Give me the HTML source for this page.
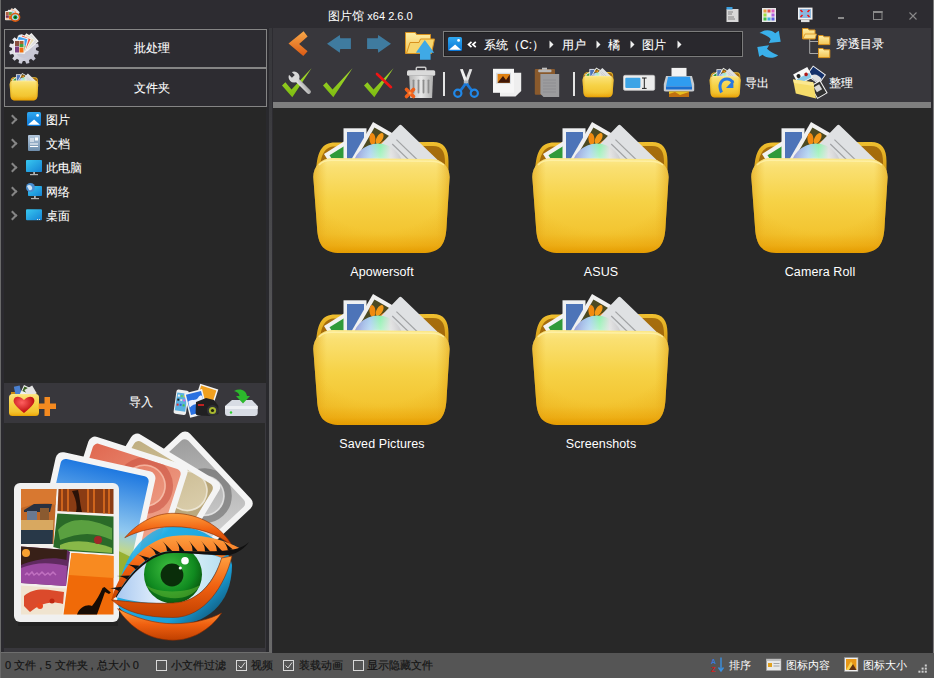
<!DOCTYPE html>
<html><head><meta charset="utf-8">
<style>
*{box-sizing:border-box;margin:0;padding:0}
html,body{width:934px;height:678px;overflow:hidden;background:#2d2c31;font-family:"Liberation Sans",sans-serif;color:#fff;font-size:12px}
.a{position:absolute}
#wl{left:0;top:0;width:1px;height:678px;background:#6a6a6a}
#wr{left:933px;top:0;width:1px;height:653px;background:#7a7a7a}
#title{left:328px;top:8px;font-size:12px;color:#fff;white-space:nowrap}
#lp{left:1px;top:28px;width:271px;height:625px;background:#2b2a2f}
.btnbox{left:4px;width:263px;border:1px solid #858585;background:#2d2c31}
.btxt{font-size:12px;color:#fff;-webkit-text-stroke:0.1px #fff;white-space:nowrap}
#tree{left:4px;top:107px;width:262px;height:276px;background:#272727}
.row{position:absolute;left:0;height:24px;width:260px}
.chev{position:absolute;left:5px;top:8px;width:7px;height:7px;border-right:2px solid #858585;border-top:2px solid #858585;transform:rotate(45deg)}
.rtxt{position:absolute;left:42px;top:4px;font-size:12px;color:#fff;-webkit-text-stroke:0.1px #fff;white-space:nowrap}
#imp{left:4px;top:383px;width:262px;height:40px;background:#38373c}
#logo{left:4px;top:423px;width:262px;height:229px;background:#2a2a2a;border-right:1px solid #3a393e;border-bottom:4px solid #38373c}
#split{left:269px;top:28px;width:3px;height:625px;background:linear-gradient(#38383c,#3a3a3e 13%,#5c5c5e 55%,#6a6a6a)}
#splitd{left:266px;top:107px;width:3px;height:546px;background:#29292d}
#tb{left:273px;top:28px;width:658px;height:74px;background:#38373c}
#strip{left:273px;top:102px;width:658px;height:6px;background:#7f7f7f}
#content{left:273px;top:108px;width:659px;height:545px;background:#282828}
#status{left:1px;top:653px;width:933px;height:25px;background:#555555}
.stxt{font-size:11px;color:#fff;white-space:nowrap}
.dk{color:#151515;-webkit-text-stroke:0.2px #151515}
.cb{position:absolute;width:11px;height:11px;border:1px solid #d0d0d0}
.fname{position:absolute;width:200px;text-align:center;font-size:12.5px;letter-spacing:0.1px;color:#fff;white-space:nowrap}
.addr{left:443px;top:31px;width:300px;height:26px;border:1px solid #7c7c7c;background:#29282d;box-shadow:inset 0 0 0 1px #1e1e20}
.sep{position:absolute;top:72px;width:2px;height:24px;background:#e8e8e8}
</style></head><body>
<svg width="0" height="0" style="position:absolute">
<defs>
<linearGradient id="fgFront" x1="0" y1="0" x2="0" y2="1">
<stop offset="0" stop-color="#fce98c"/><stop offset="0.1" stop-color="#fae072"/>
<stop offset="0.45" stop-color="#f6d246"/><stop offset="0.8" stop-color="#f3c430"/><stop offset="0.92" stop-color="#f0b41a"/><stop offset="1" stop-color="#e6a000"/>
</linearGradient>
<linearGradient id="fgSide" x1="0" y1="0" x2="1" y2="0">
<stop offset="0" stop-color="#e0a010" stop-opacity="0.55"/><stop offset="0.1" stop-color="#e8b020" stop-opacity="0"/>
<stop offset="0.9" stop-color="#e8b020" stop-opacity="0"/><stop offset="1" stop-color="#e0a010" stop-opacity="0.55"/>
</linearGradient>
<radialGradient id="fgGlow" cx="0.5" cy="0.3" r="0.75"><stop offset="0.62" stop-color="#e09a00" stop-opacity="0"/><stop offset="1" stop-color="#e09000" stop-opacity="0.28"/></radialGradient>
<linearGradient id="fgBack" x1="0" y1="0" x2="0" y2="1">
<stop offset="0" stop-color="#f0c030"/><stop offset="1" stop-color="#c88a08"/>
</linearGradient>
<linearGradient id="cdL" x1="0" y1="0" x2="1" y2="0"><stop offset="0" stop-color="#9a9ad8"/><stop offset="0.35" stop-color="#a8d0f0"/><stop offset="0.55" stop-color="#90f0b0"/><stop offset="0.75" stop-color="#e0e0e0"/><stop offset="1" stop-color="#c8c8cc"/></linearGradient>
<radialGradient id="cdG" cx="0.5" cy="0.5" r="0.5">
<stop offset="0.1" stop-color="#f0f0f4"/><stop offset="0.5" stop-color="#ffffff" stop-opacity="0.3"/><stop offset="1" stop-color="#ffffff" stop-opacity="0"/>
</radialGradient>
<symbol id="folder" viewBox="0 0 155 145">
<path d="M11,62 C11,36 17,27.5 30,27.5 L128,27 C139,27 143.5,34 143.5,46 L143.5,70 L11,70 Z" fill="url(#fgBack)"/>
<path d="M14.5,62 C14.5,39 20,31.5 30,31.5 L128,31 C137,31 140,37 140,47 L140,70 L14.5,70 Z" fill="#9a6008" opacity="0.85"/>
<g transform="translate(19 39) rotate(-32)"><rect x="0" y="0" width="46" height="40" fill="#f2f2f2"/><rect x="4" y="4" width="38" height="32" fill="#2f9a3a"/></g>
<rect x="38.5" y="13.3" width="23" height="45" fill="#eef0f2"/><rect x="42" y="17" width="17" height="40" fill="#4d74b8"/>
<g transform="rotate(30 68 7)"><rect x="68" y="7" width="34" height="48" fill="#f0f0f0"/><rect x="72" y="11" width="26" height="40" fill="#4c4a22"/>
<ellipse cx="76" cy="22" rx="3" ry="6" fill="#f08a10" transform="rotate(-35 76 22)"/><ellipse cx="82" cy="18" rx="3" ry="6" fill="#f59a18"/><ellipse cx="89" cy="20" rx="3" ry="6" fill="#e88010" transform="rotate(35 89 20)"/><ellipse cx="94" cy="27" rx="3" ry="5" fill="#f08a10" transform="rotate(70 94 27)"/></g>

<g transform="translate(95.4 9) rotate(44)"><rect x="0" y="0" width="60" height="40" rx="2" fill="#dfe1e3"/><line x1="8" y1="14" x2="50" y2="14" stroke="#a0a2a4" stroke-width="1.2"/><line x1="8" y1="20" x2="50" y2="20" stroke="#a0a2a4" stroke-width="1.2"/></g><circle cx="73" cy="54" r="25.5" fill="url(#cdL)"/><circle cx="73" cy="54" r="25.5" fill="url(#cdG)"/>
<path d="M8.3,62 C8.3,51.5 16.5,43 27,43 L126,44 C136.5,44 144.6,51.5 144.6,62 L141.5,112 C140.5,131 134,138 117,138 L36,138 C19,138 13,131 12,112 Z" fill="url(#fgFront)"/>
<path d="M8.3,62 C8.3,51.5 16.5,43 27,43 L126,44 C136.5,44 144.6,51.5 144.6,62 L141.5,112 C140.5,131 134,138 117,138 L36,138 C19,138 13,131 12,112 Z" fill="url(#fgSide)"/>
<path d="M8.3,62 C8.3,51.5 16.5,43 27,43 L126,44 C136.5,44 144.6,51.5 144.6,62 L141.5,112 C140.5,131 134,138 117,138 L36,138 C19,138 13,131 12,112 Z" fill="url(#fgGlow)"/>
<path d="M14,50 C17,46.5 21,45.3 27,45.3 L126,46.3 C132,46.3 136,47.5 139,50" fill="none" stroke="#fff4b0" stroke-width="1.5" opacity="0.7"/>
</symbol>
</defs></svg>

<div class="a" id="wl"></div>
<div class="a" id="wr"></div>
<div class="a" id="title">图片馆 <span style="font-size:11px">x64 2.6.0</span></div>

<div class="a" id="lp"></div>
<div class="a btnbox" style="top:29px;height:39px"></div>
<div class="a btnbox" style="top:68px;height:39px"></div>
<div class="a btxt" style="left:134px;top:40px">批处理</div>
<div class="a btxt" style="left:134px;top:80px">文件夹</div>

<div class="a" id="tree">
  <div class="row" style="top:1px"><div class="chev"></div><div class="rtxt">图片</div></div>
  <div class="row" style="top:25px"><div class="chev"></div><div class="rtxt">文档</div></div>
  <div class="row" style="top:49px"><div class="chev"></div><div class="rtxt">此电脑</div></div>
  <div class="row" style="top:73px"><div class="chev"></div><div class="rtxt">网络</div></div>
  <div class="row" style="top:97px"><div class="chev"></div><div class="rtxt">桌面</div></div>
</div>
<div class="a" id="imp"></div>
<div class="a btxt" style="left:129px;top:394px">导入</div>
<div class="a" id="logo"></div>
<div class="a" id="splitd"></div><div class="a" id="split"></div>

<svg class="a" style="left:0;top:0" width="270" height="652">
<defs>
<clipPath id="cardClip"><rect x="6" y="6" width="91" height="128" rx="5"/></clipPath>
<linearGradient id="lgSky" x1="0" y1="0" x2="0" y2="1"><stop offset="0" stop-color="#1e78e0"/><stop offset="0.45" stop-color="#90c8f0"/><stop offset="0.6" stop-color="#c0d890"/><stop offset="1" stop-color="#6a9028"/></linearGradient>
<linearGradient id="lgRed" x1="0" y1="0" x2="1" y2="1"><stop offset="0" stop-color="#e06850"/><stop offset="1" stop-color="#f4b8a0"/></linearGradient>
<linearGradient id="lgBeige" x1="0" y1="0" x2="1" y2="1"><stop offset="0" stop-color="#bfae80"/><stop offset="1" stop-color="#ece2c8"/></linearGradient>
<linearGradient id="lgGray" x1="0" y1="0" x2="1" y2="1"><stop offset="0" stop-color="#9c9c9c"/><stop offset="1" stop-color="#e8e8e8"/></linearGradient>
<linearGradient id="lgOrange" x1="0" y1="0" x2="0" y2="1"><stop offset="0" stop-color="#ffa040"/><stop offset="0.5" stop-color="#f06010"/><stop offset="1" stop-color="#c04000"/></linearGradient>
<radialGradient id="lgIris" cx="0.45" cy="0.4" r="0.6"><stop offset="0" stop-color="#40c040"/><stop offset="0.7" stop-color="#108a20"/><stop offset="1" stop-color="#0a5a10"/></radialGradient>
<linearGradient id="lgBlue2" x1="0" y1="0" x2="1" y2="1"><stop offset="0" stop-color="#2ab0e8" stop-opacity="0.3"/><stop offset="0.25" stop-color="#22aee6"/><stop offset="0.7" stop-color="#1aa0d8"/><stop offset="1" stop-color="#0a3048"/></linearGradient>
<radialGradient id="lgBlue" cx="0.5" cy="0.5" r="0.5"><stop offset="0.6" stop-color="#20a8e0"/><stop offset="0.9" stop-color="#1890c8"/><stop offset="1" stop-color="#1890c8" stop-opacity="0"/></radialGradient>
<linearGradient id="lgScl" x1="0" y1="0" x2="1" y2="0"><stop offset="0" stop-color="#a8c8f0"/><stop offset="0.5" stop-color="#f0f8ff"/><stop offset="1" stop-color="#b8e0f0"/></linearGradient>
</defs>
<!-- cards -->
<g transform="translate(185.3 428.6) rotate(46.9)"><rect x="0" y="0" width="103" height="140" rx="7" fill="#f4f4f4"/><rect x="6" y="6" width="91" height="128" rx="5" fill="url(#lgGray)"/><g clip-path="url(#cardClip)"><circle cx="62" cy="32" r="24" fill="none" stroke="#606060" stroke-width="7" opacity="0.55"/><circle cx="62" cy="32" r="19.5" fill="none" stroke="#ffffff" stroke-width="1.5" opacity="0.5"/></g></g>
<g transform="translate(134.8 431) rotate(31.2)"><rect x="0" y="0" width="103" height="140" rx="7" fill="#f4f4f4"/><rect x="6" y="6" width="91" height="128" rx="5" fill="url(#lgBeige)"/><g clip-path="url(#cardClip)"><circle cx="76" cy="24" r="24" fill="none" stroke="#a08a58" stroke-width="7" opacity="0.55"/><circle cx="76" cy="24" r="19.5" fill="none" stroke="#ffffff" stroke-width="1.5" opacity="0.5"/></g></g>
<g transform="translate(90.5 434.8) rotate(17.8)"><rect x="0" y="0" width="104" height="140" rx="7" fill="#f4f4f4"/><rect x="6" y="6" width="92" height="128" rx="5" fill="url(#lgRed)"/><g clip-path="url(#cardClip)"><circle cx="67" cy="32" r="25" fill="none" stroke="#c85040" stroke-width="7" opacity="0.55"/><circle cx="67" cy="32" r="20.5" fill="none" stroke="#ffe0d0" stroke-width="1.5" opacity="0.5"/></g></g>
<g transform="translate(57.2 450.8) rotate(12.5)"><rect x="0" y="0" width="102" height="140" rx="7" fill="#f4f4f4"/><rect x="6" y="6" width="90" height="128" rx="5" fill="url(#lgSky)"/><path d="M6,95 C30,80 60,78 96,88 V134 H6 Z" fill="#98b030"/><path d="M55,40 C48,42 45,55 50,62 C52,70 58,72 62,64 C66,56 64,44 55,40 Z" fill="#3a5a28"/><rect x="54" y="62" width="2" height="18" fill="#3a3020"/></g>
<!-- collage card -->
<rect x="14" y="483" width="105" height="139" rx="6" fill="#f0f0f0"/>
<rect x="18" y="622" width="100" height="4" fill="#000" opacity="0.15"/>
<rect x="21" y="489" width="92.5" height="126" rx="4" fill="#f4f0ec"/>
<path d="M21,489 H56.5 L53.5,544 H21 Z" fill="#c06828"/>
<path d="M21,489 H56.5 L55.5,505 C45,500 30,505 21,508 Z" fill="#d87830"/>
<path d="M24,510 L34,504 H52 L50,512 H24 Z" fill="#283040"/><rect x="27" y="511" width="10" height="9" fill="#6a7890"/><rect x="40" y="508" width="9" height="13" fill="#8a5a30"/>
<path d="M21,520 H53.5 L53,531 H21 Z" fill="#d8a860"/><path d="M21,530 H53 L52.5,544 H21 Z" fill="#283848"/>
<path d="M58.5,489 H113.5 V514 L57.5,511 Z" fill="#8a3c14"/>
<path d="M62,489 V511 M68,489 V511.5 M88,489 V512.5 M94,489 V513 M104,489 V513.5 M109,489 V514" stroke="#e07020" stroke-width="1.6"/>
<path d="M72,491 C75,497 78,505 76,512 L82,512 C80,505 80,497 78,490 Z" fill="#2a1208"/>
<path d="M57.3,513.5 L113.5,516.5 V554 L68,551 L53.3,547 Z" fill="#2a6a28"/>
<path d="M58,530 C70,516 90,518 112,528 L112,540 C95,532 80,532 60,540 Z" fill="#5aa040"/>
<path d="M60,545 C75,538 95,542 112,548 L112,553 L60,549 Z" fill="#88b848"/>
<circle cx="98" cy="540" r="4" fill="#a02828"/>
<path d="M21,546.5 L67,550 L70,552 L66,586 L21,583 Z" fill="#602a60"/>
<path d="M21,546.5 L67,550 L66.5,560 C50,556 35,560 21,565 Z" fill="#382018"/>
<circle cx="26" cy="553" r="4" fill="#f8a030"/>
<path d="M21,568 C35,562 50,562 67,566 L66,586 L21,583 Z" fill="#9a48a0"/>
<path d="M25,575 l2,-2 l2,2 l3,-3 l2,3 l3,-2 l2,2 l3,-3 l3,3 l3,-2 l2,2 l3,-3 l3,3" stroke="#c070c0" stroke-width="1.5" fill="none"/>
<path d="M71.5,553 L113.5,556 V614.5 H63.5 Z" fill="#f06a08"/><path d="M71.5,553 L113.5,556 V578 L69,575 Z" fill="#f88a20"/>
<path d="M77,614.5 C80,606 88,604 92,606 C96,601 100,594 102.5,588 L104.5,587 L110.8,592.5 L109,594 L105,592 C103,598 100,606 97,614.5 Z" fill="#180c04"/>
<path d="M21,585.5 L65.8,588.5 L62.5,614.5 H21 Z" fill="#f0e4d0"/>
<path d="M24,596 C35,586 50,590 64,592 L63,604 C50,600 40,604 30,612 L24,606 Z" fill="#d83818" opacity="0.9"/>
<circle cx="40" cy="606" r="3" fill="#e84820"/><circle cx="52" cy="601" r="2.5" fill="#c02810"/>
<!-- eye -->
<path d="M117,603 C118,560 145,526 173,526 C205,526 228,545 232,565 C232,605 205,625 173,625 C145,625 120,615 117,603 Z" fill="url(#lgBlue2)"/>
<path d="M124.8,537.7 C140,520 158,513.3 173,513.3 C200,513.3 222,527 233,547 C218,533 196,526.7 173,526.7 C155,526.7 138,531 124.8,537.7 Z" fill="url(#lgOrange)" stroke="#8a2a00" stroke-width="0.6"/>
<path d="M117.7,608.6 C135,618 155,623.7 173,623.7 C195,623.7 210,619 221.6,613 C210,630 192,640.2 173,640.2 C150,640.2 130,628 117.7,608.6 Z" fill="url(#lgOrange)" stroke="#8a2a00" stroke-width="0.6"/>
<path d="M111.5,599.8 C118,575 140,540 173,536 C200,533 225,540 239.3,548 C232,552 226,555 221.6,558 C212,553 195,551 173,551 C150,551 130,570 116,597 Z" fill="url(#lgOrange)"/>
<path d="M116,597 C130,572 150,551 173,551 C195,551 212,554 221.6,558 C215,578 200,603 173,603 C150,604 130,601 116,597 Z" fill="url(#lgScl)"/>
<clipPath id="sclClip"><path d="M116,597 C130,572 150,551 173,551 C195,551 212,554 221.6,558 C215,578 200,603 173,603 C150,604 130,601 116,597 Z"/></clipPath>
<g clip-path="url(#sclClip)">
<circle cx="173" cy="574.5" r="29" fill="url(#lgIris)"/>
<path d="M146,585 C155,600 190,605 200,585 C190,592 160,595 146,585 Z" fill="#5ab030" opacity="0.6"/>
<circle cx="172" cy="575" r="11.4" fill="#0a2e0a"/>
<circle cx="185" cy="560.8" r="3.8" fill="#fff"/><circle cx="180.3" cy="568" r="1.6" fill="#fff"/>
</g>
<path d="M111.5,599.8 C130,602 150,604 173,603 C200,602 215,580 221.6,558 L232,556 C225,585 205,617.5 173,617.5 C145,617.5 125,612 111.5,599.8 Z" fill="url(#lgOrange)" stroke="#8a2a00" stroke-width="0.6"/>
<path d="M116,596 C130,572 150,551 173,551 C198,551 222,553 239,548 C244,546 247,544 249,542 C245,548 238,553 230,555 C210,556 195,553 173,553 C152,553 132,572 116,598 Z" fill="#111"/>
<path d="M118.9,591.1 Q114.2,587.7 107.9,588.5 L121.8,586.7 Z M126.9,579.6 Q122.5,575.7 116.2,575.9 L130.2,575.6 Z M135.8,569.4 Q132.0,565.0 125.7,564.3 L139.6,565.8 Z M145.5,560.9 Q142.4,555.9 136.3,554.2 L149.8,558.1 Z M155.9,554.8 Q154.0,549.2 148.5,546.1 L160.7,553.0 Z M167.0,551.3 Q166.8,545.5 162.3,541.0 L172.2,551.0 Z M179.3,551.0 Q179.6,545.2 175.6,540.3 L184.5,551.1 Z M192.5,551.3 Q192.8,545.4 188.7,540.5 L197.7,551.3 Z M205.0,551.4 Q205.2,545.5 201.0,540.8 L210.2,551.4 Z M216.9,551.2 Q216.7,545.3 212.3,540.8 L222.1,550.9 Z M227.8,550.3 Q227.0,544.5 222.2,540.4 L232.9,549.5 Z " fill="#111"/>
</svg>


<svg class="a" style="left:0;top:0" width="280" height="678">
<defs>
<linearGradient id="gGear" x1="0" y1="0" x2="1" y2="1"><stop offset="0" stop-color="#f4f4f8"/><stop offset="1" stop-color="#b8b8c8"/></linearGradient>
<linearGradient id="gMon" x1="0" y1="0" x2="1" y2="1"><stop offset="0" stop-color="#38c8f0"/><stop offset="1" stop-color="#1482d4"/></linearGradient>
<linearGradient id="gDoc" x1="0" y1="0" x2="0" y2="1"><stop offset="0" stop-color="#b4c8dc"/><stop offset="1" stop-color="#6e8eac"/></linearGradient>
<radialGradient id="gHeart" cx="0.4" cy="0.35" r="0.6"><stop offset="0" stop-color="#ff6060"/><stop offset="1" stop-color="#c01010"/></radialGradient>
</defs>
<path d="M36.0,49.0 L35.9,50.1 L38.8,51.3 L38.0,54.4 L34.9,54.0 L34.4,55.0 L33.8,56.0 L35.7,58.4 L33.4,60.7 L31.0,58.8 L30.0,59.4 L29.0,59.9 L29.4,63.0 L26.3,63.8 L25.1,60.9 L24.0,61.0 L22.9,60.9 L21.7,63.8 L18.6,63.0 L19.0,59.9 L18.0,59.4 L17.0,58.8 L14.6,60.7 L12.3,58.4 L14.2,56.0 L13.6,55.0 L13.1,54.0 L10.0,54.4 L9.2,51.3 L12.1,50.1 L12.0,49.0 L12.1,47.9 L9.2,46.7 L10.0,43.6 L13.1,44.0 L13.6,43.0 L14.2,42.0 L12.3,39.6 L14.6,37.3 L17.0,39.2 L18.0,38.6 L19.0,38.1 L18.6,35.0 L21.7,34.2 L22.9,37.1 L24.0,37.0 L25.1,37.1 L26.3,34.2 L29.4,35.0 L29.0,38.1 L30.0,38.6 L31.0,39.2 L33.4,37.3 L35.7,39.6 L33.8,42.0 L34.4,43.0 L34.9,44.0 L38.0,43.6 L38.8,46.7 L35.9,47.9 Z" fill="url(#gGear)"/>
<circle cx="24" cy="49" r="9" fill="#c8c8d4"/>
<g transform="translate(31.5 33) rotate(49)"><rect x="0" y="0" width="11" height="15" fill="#f4f4f4"/><rect x="1" y="1" width="9" height="13" fill="#dcdcdc"/></g>
<g transform="translate(26.4 33.3) rotate(37)"><rect x="0" y="0" width="11" height="15" fill="#f0f0f0"/><rect x="1" y="1" width="9" height="13" fill="#e8dcb0"/></g>
<g transform="translate(21.9 34.2) rotate(25)"><rect x="0" y="0" width="11" height="15" fill="#f4f4f4"/><rect x="1" y="1" width="9" height="13" fill="#f05a40"/></g>
<g transform="translate(18 35.6) rotate(15)"><rect x="0" y="0" width="11" height="16" fill="#f4f4f4"/><rect x="1" y="1" width="9" height="7" fill="#40a0f0"/><rect x="1" y="8" width="9" height="7" fill="#60a030"/></g>
<rect x="14" y="39.8" width="10.5" height="13.8" fill="#f0f0f0"/>
<rect x="15" y="41" width="4" height="5" fill="#8a5040"/><rect x="19.5" y="41" width="4" height="3" fill="#b06030"/><rect x="19.5" y="44" width="4" height="3" fill="#40a040"/>
<rect x="15" y="46.5" width="4" height="6" fill="#7a4080"/><rect x="19.5" y="47.5" width="4" height="5" fill="#f07010"/>
<use href="#folder" x="7.9" y="71.5" width="32.5" height="30.4"/>
<!-- tree icons -->
<rect x="27" y="112" width="14" height="14" rx="1.5" fill="url(#gBlue)"/>
<path d="M28,124.8 L34.1,119.4 L40,124.8 Z" fill="#fff"/><circle cx="37.6" cy="115.4" r="1.4" fill="#fff"/>
<rect x="28" y="135" width="12" height="16" rx="1" fill="url(#gDoc)"/>
<path d="M30,139 H34 M30,141 H34 M30,144 H38 M30,146.5 H38" stroke="#fff" stroke-width="1.1"/><rect x="35" y="137.5" width="3" height="3" fill="#fff"/>
<rect x="26" y="160" width="16" height="12" rx="0.8" fill="url(#gMon)"/>
<rect x="33.2" y="172" width="1.8" height="2" fill="#b0b0b0"/><rect x="30" y="174" width="8" height="1.2" fill="#b0b0b0"/>
<rect x="28" y="186" width="14" height="10" rx="0.8" fill="url(#gMon)"/>
<rect x="34" y="196" width="1.8" height="2" fill="#b0b0b0"/><rect x="31" y="198" width="8" height="1.2" fill="#b0b0b0"/>
<circle cx="30.5" cy="187.5" r="4.5" fill="#4a8ed0"/><path d="M27,186 C29,184 31,185 32,187 C33,189 31,191 29,190" fill="#e0eef8" opacity="0.9"/>
<rect x="26" y="209.2" width="16" height="11.1" rx="1" fill="url(#gMon)"/>
<rect x="37" y="219" width="1" height="1" fill="#ddd"/><rect x="39" y="219" width="1" height="1" fill="#ddd"/>
<!-- import bar -->
<path d="M11,392 L36,392 L37,396 H11 Z" fill="#c88a10"/>
<g transform="rotate(-12 18 392)"><rect x="15" y="386" width="6" height="10" fill="#4a80d0"/></g>
<g transform="rotate(25 25 390)"><rect x="22" y="386" width="7" height="10" fill="#f0f0f0"/><rect x="23" y="387" width="5" height="5" fill="#3a6020"/></g>
<g transform="rotate(-30 29 392)"><rect x="26" y="388" width="9" height="9" fill="#e4e4e4"/></g>
<rect x="9" y="394" width="30" height="22" rx="3.5" fill="url(#fgFront)"/>
<path d="M24,413 C15,406 12.5,402 14,399 C15.5,396 20,396 24,400 C28,396 32.5,396 34,399 C35.5,402 33,406 24,413 Z" fill="url(#gHeart)"/>
<path d="M38.7,403.5 H56 V409 H38.7 Z M44.5,397 H50 V416 H44.5 Z" fill="#f48a20"/>
<!-- phone camera -->
<g transform="rotate(8 181 402)"><rect x="175" y="390" width="12.5" height="24.5" rx="2" fill="#eeeeee"/><rect x="176" y="393" width="10.5" height="18" fill="#5ab0e0"/>
<rect x="177" y="395" width="2" height="2" fill="#f0f0f0"/><rect x="180" y="395" width="2" height="2" fill="#60d060"/><rect x="183" y="395" width="2" height="2" fill="#f0c040"/>
<rect x="177" y="399" width="2" height="2" fill="#202020"/><rect x="180" y="399" width="2" height="2" fill="#e0e0e0"/><rect x="183" y="399" width="2" height="2" fill="#e060e0"/>
<rect x="177" y="404" width="2" height="2" fill="#e03030"/><rect x="180" y="404" width="2" height="2" fill="#3060e0"/><rect x="183" y="404" width="2" height="2" fill="#40c040"/></g>
<g transform="rotate(18 206 395)"><rect x="197" y="386" width="19" height="16" fill="#f4f4f4"/><rect x="198.5" y="387.5" width="16" height="13" fill="#f0a020"/></g>
<g transform="rotate(-14 196 404)"><rect x="187" y="391" width="18.5" height="25" fill="#f4f4f4"/><rect x="188.5" y="392.5" width="15.5" height="21" fill="#2a70e0"/><path d="M189,400 C193,397 196,402 200,398 C202,396 203,398 204,397 V404 C200,406 195,402 189,406 Z" fill="#e8f0ff"/></g>
<path d="M196,402 L206,398 L214,400 L218.4,406 V414 L210,416 L198,415.5 Q195.6,415 195.6,413 Z" fill="#202022"/>
<rect x="198" y="404" width="6" height="2" fill="#c02020"/>
<circle cx="212.5" cy="410.5" r="5.6" fill="#303236"/><circle cx="212.5" cy="410.5" r="3.6" fill="#a8b830"/><circle cx="212.5" cy="410.5" r="1.6" fill="#202010"/>
<!-- drive -->
<path d="M225,406 L232,400 H252 L257.7,406 V413 Q257.7,416 254,416 H228 Q225,416 225,413 Z" fill="#d8dce4"/>
<path d="M225,406 H257.7 V409 H225 Z" fill="#eef0f4"/>
<circle cx="231" cy="412.5" r="1.2" fill="#30d030"/>
<path d="M234,391 C240,388 246,390 247,396 H250 L243,403.5 L236,396 H239.5 C239,393 237,392 234,391 Z" fill="#2cb82c"/>
</svg>


<div class="a" id="tb"></div>
<div class="a addr"></div>
<div class="a" id="strip"></div>
<div class="a" id="content"></div>
<svg class="a" style="left:305px;top:115px" width="155" height="145"><use href="#folder"/></svg>
<div class="fname" style="left:282px;top:265px">Apowersoft</div>
<svg class="a" style="left:524px;top:115px" width="155" height="145"><use href="#folder"/></svg>
<div class="fname" style="left:501px;top:265px">ASUS</div>
<svg class="a" style="left:743px;top:115px" width="155" height="145"><use href="#folder"/></svg>
<div class="fname" style="left:720px;top:265px">Camera Roll</div>
<svg class="a" style="left:305px;top:287px" width="155" height="145"><use href="#folder"/></svg>
<div class="fname" style="left:282px;top:437px">Saved Pictures</div>
<svg class="a" style="left:524px;top:287px" width="155" height="145"><use href="#folder"/></svg>
<div class="fname" style="left:501px;top:437px">Screenshots</div>


<div class="a" id="status"></div>
<div class="a" style="left:1px;top:652px;width:268px;height:1px;background:#6e6e6e"></div>

<svg class="a" style="left:0;top:0" width="934" height="678" viewBox="0 0 934 678">
<defs>
<linearGradient id="gOr" x1="0" y1="0" x2="0" y2="1"><stop offset="0" stop-color="#f7a848"/><stop offset="1" stop-color="#dc5a14"/></linearGradient>
<linearGradient id="gGr" x1="0" y1="0" x2="0" y2="1"><stop offset="0" stop-color="#a8dc30"/><stop offset="1" stop-color="#7cbc10"/></linearGradient>
<linearGradient id="gSil" x1="0" y1="0" x2="1" y2="1"><stop offset="0" stop-color="#f0f0f0"/><stop offset="1" stop-color="#9a9a9a"/></linearGradient>
<linearGradient id="gTrash" x1="0" y1="0" x2="1" y2="0"><stop offset="0" stop-color="#b8b8b8"/><stop offset="0.5" stop-color="#e8e8e8"/><stop offset="1" stop-color="#b0b0b0"/></linearGradient>
<linearGradient id="gFy" x1="0" y1="0" x2="0" y2="1"><stop offset="0" stop-color="#fff0a8"/><stop offset="1" stop-color="#f2c455"/></linearGradient>
<linearGradient id="gBlue" x1="0" y1="0" x2="0" y2="1"><stop offset="0" stop-color="#30a8f0"/><stop offset="1" stop-color="#0a76d6"/></linearGradient>
</defs>
<!-- row1: back chevron -->
<path d="M288.5,43.6 L303.6,31.3 L307.6,36.5 L299.1,44 L307.6,51.3 L303.3,56 Z" fill="url(#gOr)"/>
<path d="M327,43.8 L339.8,35 L340.2,38.3 L350.9,38.3 L350.9,49 L340.2,49 L339.8,52.7 Z" fill="#3f7b9f"/>
<path d="M391,43.8 L378.2,35 L377.8,38.3 L367.1,38.3 L367.1,49 L377.8,49 L378.2,52.7 Z" fill="#3f7b9f"/>
<!-- folder up -->
<path d="M405.5,32.5 L415.5,32.5 L416.5,34.5 L430.5,34.5 L430.5,53.5 L405.5,53.5 Z" fill="url(#gFy)" stroke="#d8921e" stroke-width="1"/>
<path d="M406.5,53.5 L410,42.5 L419,42.5 L420.5,39 L434.5,39 L431.5,53.5 Z" fill="#f7d66e" stroke="#d8921e" stroke-width="1"/>
<path d="M424.8,40 L434.2,52.8 L430.6,52.8 L430.6,59.8 L420,59.8 L420,52.8 L415.8,52.8 Z" fill="#3fa9e6"/>
<!-- address icon -->
<rect x="448" y="37" width="14" height="14" rx="1.5" fill="url(#gBlue)"/>
<path d="M449,49.8 L455.1,44.4 L461,49.8 Z" fill="#fff"/>
<circle cx="458.6" cy="40.4" r="1.4" fill="#fff"/>
<!-- refresh -->
<path d="M759.5,33 C765,28.5 772,30 775.2,33.2 L778.8,30.8 L780.7,41.7 L768.9,42.9 L770.7,39 C768,36 764,34 759.5,33 Z" fill="#3ab0ea"/>
<path d="M778.2,55.2 C773,59.5 766,58 762.5,54.8 L759.2,56.8 L757.3,46.9 L769.1,45.2 L767,48.8 C770,51.5 774,54 778.2,55.2 Z" fill="#3ab0ea"/>
<!-- tree folders -->
<path d="M809.7,39 V53.5 H818 M809.7,41.5 H818" fill="none" stroke="#a8a8a8" stroke-width="1"/>
<path d="M802.5,28.5 H808 L809,30 H815 V38.8 H802.5 Z" fill="url(#gFy)" stroke="#d8921e" stroke-width="1"/>
<path d="M803,38.8 L805,34 H816.5 L815,38.8 Z" fill="#fbe08a" stroke="#d8921e" stroke-width="0.8"/>
<path d="M818.5,35.5 H823 L824,36.8 H829.8 V44.6 H818.5 Z" fill="url(#gFy)" stroke="#d8921e" stroke-width="1"/>
<path d="M818.5,48.5 H823 L824,49.8 H829.8 V57.6 H818.5 Z" fill="url(#gFy)" stroke="#d8921e" stroke-width="1"/>
<!-- row2 checks -->
<path d="M282,85.5 L285.4,82.3 L291.5,89.5 L311.5,68.2 L292.3,97.2 Z" fill="url(#gGr)"/>
<g transform="rotate(-45 299 82)"><rect x="296.8" y="77" width="4.4" height="21" rx="2.2" fill="url(#gSil)"/><circle cx="299" cy="75" r="5.5" fill="#d8d8d8"/><rect x="297" y="68" width="4" height="6" fill="#38373c"/></g>
<path d="M323,85.5 L326.4,82.3 L332.5,89.5 L352.5,68.2 L333.3,97.2 Z" fill="url(#gGr)"/>
<path d="M364,85.5 L367.4,82.3 L373.5,89.5 L393.5,68.2 L374.3,97.2 Z" fill="url(#gGr)"/>
<path d="M377,74 L391,87.2" stroke="#f01414" stroke-width="2.6" stroke-linecap="round"/>
<!-- trash -->
<rect x="416.3" y="67.2" width="9.5" height="4" rx="1" fill="none" stroke="#c8c8c8" stroke-width="1.5"/>
<path d="M409.2,75.7 L433.1,75.7 L432.1,97.9 L410.2,97.9 Z" fill="url(#gTrash)"/>
<rect x="407" y="70.2" width="28.2" height="5.5" rx="1.5" fill="#dadada"/>
<rect x="412.6" y="79.4" width="1.8" height="14" rx="0.9" fill="#8e8e8e"/><rect x="417.6" y="79.4" width="1.8" height="14" rx="0.9" fill="#8e8e8e"/>
<rect x="422.6" y="79.4" width="1.8" height="14" rx="0.9" fill="#8e8e8e"/><rect x="427.6" y="79.4" width="1.8" height="14" rx="0.9" fill="#8e8e8e"/>
<path d="M406.5,89.5 L413.5,96.5 M413.5,89.5 L406.5,96.5" stroke="#f0601a" stroke-width="3.6" stroke-linecap="round"/><circle cx="410" cy="93" r="1.6" fill="#ff9a50"/>
<!-- separators -->
<rect x="443" y="72" width="2" height="24" fill="#e4e4e4"/>
<rect x="573" y="72" width="2" height="24" fill="#e4e4e4"/>
<!-- scissors -->
<path d="M460,69.2 L462.8,69 L467.8,82 L465,83.5 Z" fill="#f2f2f2"/>
<path d="M469.5,69 L472.3,69.2 L467.3,83.5 L464.5,82 Z" fill="#e0e0e0"/>
<rect x="463.8" y="80.5" width="4.6" height="4.5" rx="1" fill="#b0b8c0"/>
<path d="M465,84.5 L460.5,90.5 M467.2,84.5 L471.8,90.5" stroke="#1a78d8" stroke-width="2.8" stroke-linecap="round"/>
<circle cx="457.8" cy="93.2" r="3.6" fill="none" stroke="#2088e8" stroke-width="2.2"/>
<circle cx="474.3" cy="93.2" r="3.6" fill="none" stroke="#2088e8" stroke-width="2.2"/>
<!-- slides -->
<path d="M500,72.8 H521.2 V91 L515.5,96.6 H500 Z" fill="#eeeeee"/>
<rect x="493" y="68.8" width="21" height="24" fill="#f6f6f6"/>
<rect x="496" y="72.8" width="15" height="11" fill="#d8dce0"/>
<rect x="497.6" y="74" width="12.2" height="8.8" fill="#e08010"/>
<path d="M497.6,82.8 L503,76 L506,80 L509.8,74.5 V82.8 Z" fill="#401808"/>
<!-- clipboard -->
<rect x="534.8" y="69" width="20.2" height="25.8" rx="1" fill="#8a5a2c"/>
<rect x="538.2" y="69.5" width="13.3" height="2.8" rx="1" fill="#b8b8b8"/>
<rect x="542" y="67.7" width="5" height="2" fill="#c0c0c0"/>
<path d="M540.4,74 H559.2 V97 H543.5 L540.4,93.8 Z" fill="#9c9c9e"/>
<path d="M543,80 H556 M543,83 H556 M543,86 H556 M543,89 H556 M543,92 H556" stroke="#8a8a8c" stroke-width="0.7"/>
<!-- small folders -->
<use href="#folder" x="580.6" y="65.9" width="35.3" height="33"/>
<use href="#folder" x="707.7" y="66.2" width="35.3" height="33"/>
<path d="M721.5,92.5 C718,85 721,79 727,79 C730,79 732,81 733,83" fill="none" stroke="#2a78e0" stroke-width="3"/>
<path d="M733.4,80 L733.4,88 L726,88 Z" fill="#2a78e0"/>
<!-- rename -->
<rect x="623.5" y="75.3" width="31.2" height="15" rx="1.5" fill="#ececec" stroke="#c8c8c8" stroke-width="0.8"/>
<rect x="625.3" y="77.7" width="15.1" height="10.3" rx="1" fill="#3da4e6"/>
<path d="M642,78 H646.6 M644.3,78 V88.4 M642,88.4 H646.6" stroke="#202020" stroke-width="1"/>
<!-- printer -->
<rect x="671.5" y="67.9" width="15" height="8.5" fill="#f2f2f2"/>
<path d="M666,76 H692 L694.2,84 V90.5 Q694.2,91.4 692,91.4 H666 Q663.8,91.4 663.8,90.5 V84 Z" fill="#c8ccd0"/>
<path d="M668,76.8 H690 L692,86.5 H666 Z" fill="#2f9cf0"/>
<rect x="666" y="86.5" width="26" height="3" fill="#1a6fd0"/>
<rect x="669" y="91.4" width="20" height="5.6" fill="#e8c020"/>
<path d="M669,94 L675,92 L680,95 L689,92 V97 H669 Z" fill="#c07010"/>
<!-- organize -->
<g transform="rotate(36 816 75)"><rect x="808" y="69" width="16" height="12" fill="#f4f4f4"/><rect x="809" y="70" width="14" height="10" fill="#13306a"/><path d="M812,80 C813,75 817,73 823,75 V80 Z" fill="#e0e0e0"/></g>
<g transform="rotate(60 819 90)"><rect x="811" y="84" width="15" height="12" fill="#f4f4f4"/><rect x="812" y="85" width="13" height="10" fill="#303030"/><rect x="814" y="87" width="6" height="6" fill="#d8d8d8"/></g>
<g transform="rotate(-28 803 76)"><rect x="795" y="70" width="16" height="12" fill="#f8f8f8"/><rect x="796" y="76" width="14" height="5" fill="#8ac8e8"/><circle cx="799" cy="74" r="2" fill="#222"/><circle cx="806.5" cy="76" r="1.8" fill="#b01818"/></g>
<path d="M793,79.6 L813.2,82.2 L816,98.4 L795.8,93.4 Z" fill="#f5dc6a"/>
<path d="M793,79.6 L813.2,82.2 L814,86 L794,83 Z" fill="#fbe890"/>
</svg>


<div class="a btxt" style="left:836px;top:36px">穿透目录</div>
<div class="a btxt" style="left:745px;top:75px">导出</div>
<div class="a btxt" style="left:829px;top:75px">整理</div>

<div class="a btxt" style="left:484px;top:37px">系统（C:）</div>
<div class="a btxt" style="left:562px;top:37px">用户</div>
<div class="a btxt" style="left:608px;top:37px">橘</div>
<div class="a btxt" style="left:642px;top:37px">图片</div>
<svg class="a" style="left:0;top:0" width="934" height="678">
<path d="M471.5,41.8 L468.5,44.5 L471.5,47.2 M475.8,41.8 L472.8,44.5 L475.8,47.2" fill="none" stroke="#fff" stroke-width="1.7"/>
<path d="M549.5,40.5 L553.5,44.5 L549.5,48.5 Z M596.5,40.5 L600.5,44.5 L596.5,48.5 Z M630.5,40.5 L634.5,44.5 L630.5,48.5 Z M677.5,40.5 L681.5,44.5 L677.5,48.5 Z" fill="#f0f0f0"/>
<!-- window controls -->
<rect x="838" y="17" width="6" height="2" fill="#8a8a8a"/>
<rect x="873.5" y="11.5" width="8.5" height="8" fill="none" stroke="#8a8a8a" stroke-width="1"/>
<rect x="873" y="11" width="9.5" height="2" fill="#8a8a8a"/>
<path d="M909.5,12.5 L916.5,19.5 M916.5,12.5 L909.5,19.5" stroke="#8a8a8a" stroke-width="1.1"/>
<!-- title icons -->
<rect x="726.5" y="9" width="12" height="13" fill="#d8d8d8"/>
<rect x="726.5" y="7" width="6" height="2.5" fill="#3aa0e0"/>
<path d="M728,12 H733 M728,14 H732 M728,17 H734 M728,19 H735" stroke="#707070" stroke-width="0.8"/>
<rect x="762" y="8" width="14" height="14" fill="#e8e8e8"/>
<rect x="763.5" y="9.5" width="3" height="3" fill="#e8a040"/><rect x="767.5" y="9.5" width="3" height="3" fill="#e05050"/><rect x="771.5" y="9.5" width="3" height="3" fill="#e060c0"/>
<rect x="763.5" y="13.5" width="3" height="3" fill="#a0e040"/><rect x="767.5" y="13.5" width="3" height="3" fill="#f0f0f0"/><rect x="771.5" y="13.5" width="3" height="3" fill="#b060e0"/>
<rect x="763.5" y="17.5" width="3" height="3" fill="#40c040"/><rect x="767.5" y="17.5" width="3" height="3" fill="#40b0e0"/><rect x="771.5" y="17.5" width="3" height="3" fill="#6060e0"/>
<rect x="798" y="7.6" width="14.5" height="12" fill="#f0f0f0"/>
<rect x="799.5" y="9" width="11.5" height="9" fill="#8ab8e0"/>
<path d="M800.5,10 L802.5,12 M809.5,10 L807.5,12 M800.5,17 L802.5,15 M809.5,17 L807.5,15" stroke="#f01010" stroke-width="1.5"/>
<rect x="801" y="19.6" width="8.5" height="2.5" fill="#e0e0e0"/>
</svg>

<div class="a stxt dk" style="left:5px;top:658px">0 文件 , 5 文件夹 , 总大小 0</div>
<div class="a stxt dk" style="left:171px;top:658px">小文件过滤</div>
<div class="a stxt dk" style="left:251px;top:658px">视频</div>
<div class="a stxt dk" style="left:299px;top:658px">装载动画</div>
<div class="a stxt dk" style="left:367px;top:658px">显示隐藏文件</div>
<div class="a stxt" style="left:729px;top:658px">排序</div>
<div class="a stxt" style="left:786px;top:658px">图标内容</div>
<div class="a stxt" style="left:863px;top:658px">图标大小</div>
<svg class="a" style="left:0;top:0" width="934" height="678">
<rect x="156.5" y="660.5" width="10" height="10" fill="none" stroke="#d8d8d8" stroke-width="1"/>
<rect x="236.5" y="660.5" width="10" height="10" fill="none" stroke="#d8d8d8" stroke-width="1"/>
<path d="M238.5,665.5 L241,668 L245,662.5" fill="none" stroke="#d8d8d8" stroke-width="1"/>
<rect x="283.5" y="660.5" width="10" height="10" fill="none" stroke="#d8d8d8" stroke-width="1"/>
<path d="M285.5,665.5 L288,668 L292,662.5" fill="none" stroke="#d8d8d8" stroke-width="1"/>
<rect x="353.5" y="660.5" width="10" height="10" fill="none" stroke="#d8d8d8" stroke-width="1"/>
<!-- sort icon -->
<text x="711" y="664" font-family="Liberation Sans" font-size="7" font-weight="bold" fill="#3a7ad8">A</text>
<text x="711" y="672" font-family="Liberation Sans" font-size="7" font-weight="bold" fill="#d02020">Z</text>
<path d="M721,657.5 V670 M718.5,667.5 L721,671 L723.5,667.5" fill="none" stroke="#3a90e0" stroke-width="1.4"/>
<!-- content icon -->
<rect x="766.5" y="659" width="14.5" height="11.5" fill="#e8e8e8" stroke="#a0a0a0" stroke-width="0.6"/>
<rect x="766.5" y="659" width="14.5" height="2" fill="#c0c0c0"/>
<rect x="768" y="663" width="4" height="4" fill="#e0a020"/>
<path d="M773.5,663.5 H779.5 M773.5,666 H779.5" stroke="#909090" stroke-width="0.8"/>
<!-- size icon -->
<rect x="844.5" y="657.5" width="13.5" height="14" fill="#f0f0f0" stroke="#909090" stroke-width="0.6"/>
<rect x="846" y="659" width="10.5" height="11" fill="#e89818"/>
<path d="M846,670 L851,661.5 L856.5,670 Z" fill="#f8d050"/><path d="M849,670 L853,664 L856.5,670 Z" fill="#603010"/>
<!-- grip -->
<rect x="924.8" y="664.5" width="2" height="2" fill="#cfcfcf"/><rect x="921.6" y="667.6" width="2" height="2" fill="#cfcfcf"/><rect x="924.8" y="667.6" width="2" height="2" fill="#cfcfcf"/><rect x="918.4" y="670.7" width="2" height="2" fill="#cfcfcf"/><rect x="921.6" y="670.7" width="2" height="2" fill="#cfcfcf"/><rect x="924.8" y="670.7" width="2" height="2" fill="#cfcfcf"/>
<!-- app icon title -->
<g transform="translate(15 7.5) rotate(45)"><rect x="0" y="0" width="7" height="9" rx="1" fill="#e8e8e8"/></g>
<g transform="translate(11.5 8) rotate(30)"><rect x="0" y="0" width="7" height="9" rx="1" fill="#f0e0d0"/><rect x="1" y="1" width="5" height="7" fill="#f09070"/></g>
<g transform="translate(8 9.5) rotate(12)"><rect x="0" y="0" width="7" height="9" rx="1" fill="#f4f4f4"/><rect x="1" y="1" width="5" height="4" fill="#50a8e8"/><rect x="1" y="5" width="5" height="3" fill="#90b040"/></g>
<rect x="5" y="11" width="7.5" height="9.2" rx="0.8" fill="#e8e4e0"/>
<rect x="5.8" y="12" width="3" height="3" fill="#b06040"/><rect x="9" y="12" width="2.8" height="3.5" fill="#60a040"/>
<rect x="5.8" y="15.3" width="3" height="2.5" fill="#803050"/><rect x="9" y="15.8" width="2.8" height="3.6" fill="#f06a10"/><rect x="5.8" y="18" width="3" height="1.6" fill="#f0c0a0"/>
<ellipse cx="15.3" cy="17.3" rx="4.3" ry="3.8" fill="#a8d8f0" stroke="#d85a10" stroke-width="1.6"/>
<circle cx="15.3" cy="17.3" r="2" fill="#108a20"/><circle cx="15.3" cy="17.3" r="0.8" fill="#063010"/>
</svg>
</body></html>
